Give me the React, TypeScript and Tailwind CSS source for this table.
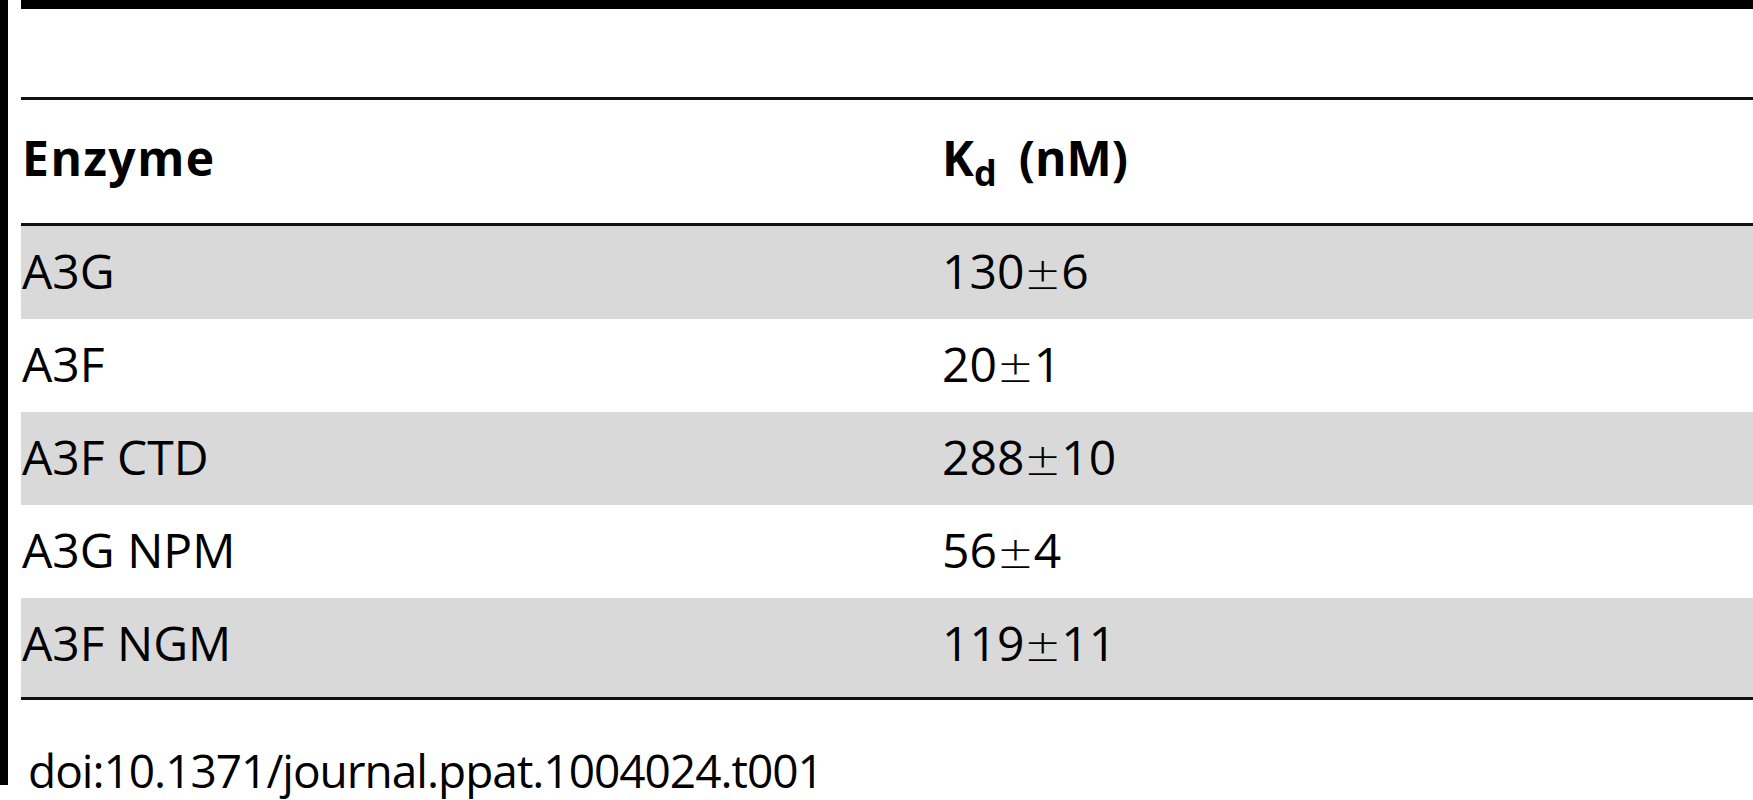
const rows = [
  { enzyme: "A3G", kd: ["130", "6"], shaded: true },
  { enzyme: "A3F", kd: ["20", "1"], shaded: false },
  { enzyme: "A3F CTD", kd: ["288", "10"], shaded: true },
  { enzyme: "A3G NPM", kd: ["56", "4"], shaded: false },
  { enzyme: "A3F NGM", kd: ["119", "11"], shaded: true },
]

export default function App() {
  return (
    <div className="flex h-[800px] w-[1753px] overflow-hidden bg-white text-black [font-family:'Open_Sans','Liberation_Sans',sans-serif]">
      <div className="h-[785px] w-[8px] shrink-0 bg-black" />
      <div className="ml-[13px] flex flex-1 flex-col">
        <div className="h-[9px] bg-black" />
        <div className="h-[88px]" />
        <div className="h-[3px] bg-[#111]" />
        <div className="grid h-[123px] grid-cols-[920px_1fr] pl-[1px] pt-[34px] text-[48px] font-bold leading-none">
          <div className="tracking-[1.5px]">Enzyme</div>
          <div>
            K<span className="align-[-10px] text-[36px]">d</span>
            <span className="ml-[22px]">(nM)</span>
          </div>
        </div>
        <div className="h-[3px] bg-[#111]" />
        {rows.map((r, i) => (
          <div
            key={r.enzyme}
            className={`grid grid-cols-[920px_1fr] pl-[1px] pt-[21px] text-[48px] leading-none ${
              i === rows.length - 1 ? "h-[99px]" : "h-[93px]"
            } ${r.shaded ? "bg-[#d9d9d9]" : "bg-white"}`}
          >
            <div>{r.enzyme}</div>
            <div>
              {r.kd[0]}
              <span className="[font-family:'DejaVu_Sans',sans-serif] text-[44px] font-light">±</span>
              {r.kd[1]}
            </div>
          </div>
        ))}
        <div className="h-[3px] bg-[#111]" />
        <div className="mt-[47px] pl-[7px] text-[46px] leading-none tracking-[-1px]">
          doi:10.1371/journal.ppat.1004024.t001
        </div>
      </div>
    </div>
  )
}
